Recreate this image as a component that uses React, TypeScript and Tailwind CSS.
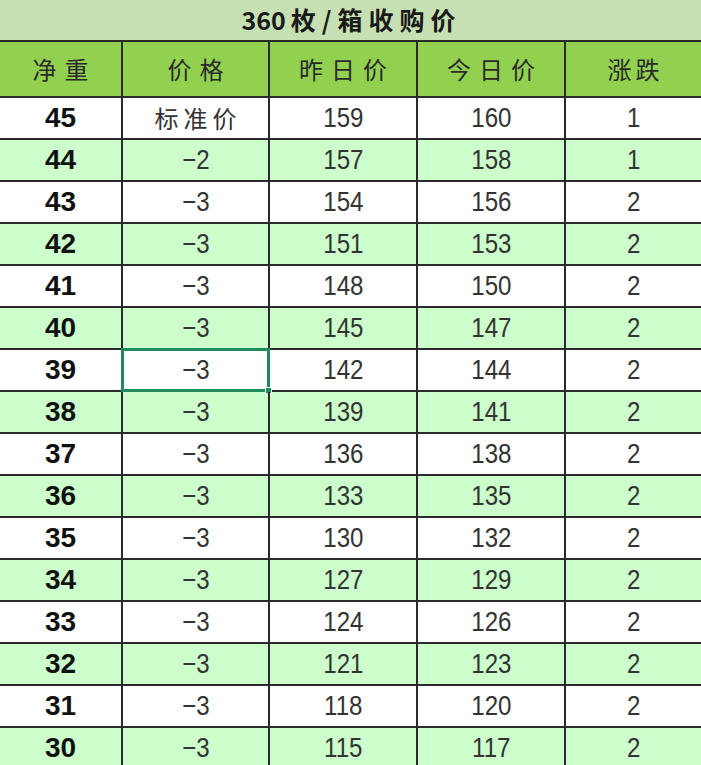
const rows: [number, string, number, number, number][] = [
  [45, "标准价", 159, 160, 1],
  [44, "−2", 157, 158, 1],
  [43, "−3", 154, 156, 2],
  [42, "−3", 151, 153, 2],
  [41, "−3", 148, 150, 2],
  [40, "−3", 145, 147, 2],
  [39, "−3", 142, 144, 2],
  [38, "−3", 139, 141, 2],
  [37, "−3", 136, 138, 2],
  [36, "−3", 133, 135, 2],
  [35, "−3", 130, 132, 2],
  [34, "−3", 127, 129, 2],
  [33, "−3", 124, 126, 2],
  [32, "−3", 121, 123, 2],
  [31, "−3", 118, 120, 2],
  [30, "−3", 115, 117, 2],
];

const grid = "grid grid-cols-[123px_147px_148px_148px_135px]";
const cjk = "font-['Noto_Sans_CJK_SC',sans-serif]";
const num = "font-['Liberation_Sans',Arial,sans-serif]";

function Num({ v }: { v: string | number }) {
  return <span className="inline-block scale-x-[0.86]">{v}</span>;
}

export default function App() {
  return (
    <div className="w-[701px] h-[765px] overflow-hidden bg-white text-[#222]">
      <div
        className={`h-[42px] flex items-center justify-center bg-[#c6e0b4] border-b-2 border-[#2a2a2a] ${cjk} font-bold text-[25px] tracking-[6px] pl-[2px] text-[#1a1a1a]`}
      >
        <span className="tracking-normal mr-[5px]">360</span>枚/箱收购价
      </div>
      <div
        className={`${grid} h-[56px] bg-[#92d050] border-b-2 border-[#2a2a2a] ${cjk} text-[24px] text-[#2a2a2a]`}
      >
        <div className="flex items-center justify-center border-r-2 border-[#2a2a2a] tracking-[8px] pl-[8px]">净重</div>
        <div className="flex items-center justify-center border-r-2 border-[#2a2a2a] tracking-[8px] pl-[8px]">价格</div>
        <div className="flex items-center justify-center border-r-2 border-[#2a2a2a] tracking-[8px] pl-[8px]">昨日价</div>
        <div className="flex items-center justify-center border-r-2 border-[#2a2a2a] tracking-[8px] pl-[8px]">今日价</div>
        <div className="flex items-center justify-center tracking-[4px] pl-[4px]">涨跌</div>
      </div>
      {rows.map(([w, p, y, t, d], i) => (
        <div
          key={w}
          className={`${grid} h-[42px] border-b-2 border-[#2a2a2a] ${i % 2 === 0 ? "bg-white" : "bg-[#ccffcc]"} text-[28px] leading-none`}
        >
          <div className={`flex items-center justify-center border-r-2 border-[#2a2a2a] ${num} font-bold text-[#111]`}>
            {w}
          </div>
          <div
            className={`relative flex items-center justify-center border-r-2 border-[#2a2a2a] text-[#333] ${
              p === "标准价" ? `${cjk} text-[24px] tracking-[5px] pl-[5px]` : num
            }`}
          >
            {p === "标准价" ? p : <Num v={p} />}
            {w === 39 && (
              <div className="absolute -left-[2px] -top-[2px] -right-[2px] -bottom-[2px] border-[3px] border-[#1f8a5c]">
                <div className="absolute -right-[5px] -bottom-[5px] w-[7px] h-[7px] bg-[#1f8a5c] border border-white" />
              </div>
            )}
          </div>
          <div className={`flex items-center justify-center border-r-2 border-[#2a2a2a] ${num} text-[#333]`}>
            <Num v={y} />
          </div>
          <div className={`flex items-center justify-center border-r-2 border-[#2a2a2a] ${num} text-[#333]`}>
            <Num v={t} />
          </div>
          <div className={`flex items-center justify-center ${num} text-[#333]`}>
            <Num v={d} />
          </div>
        </div>
      ))}
    </div>
  );
}
